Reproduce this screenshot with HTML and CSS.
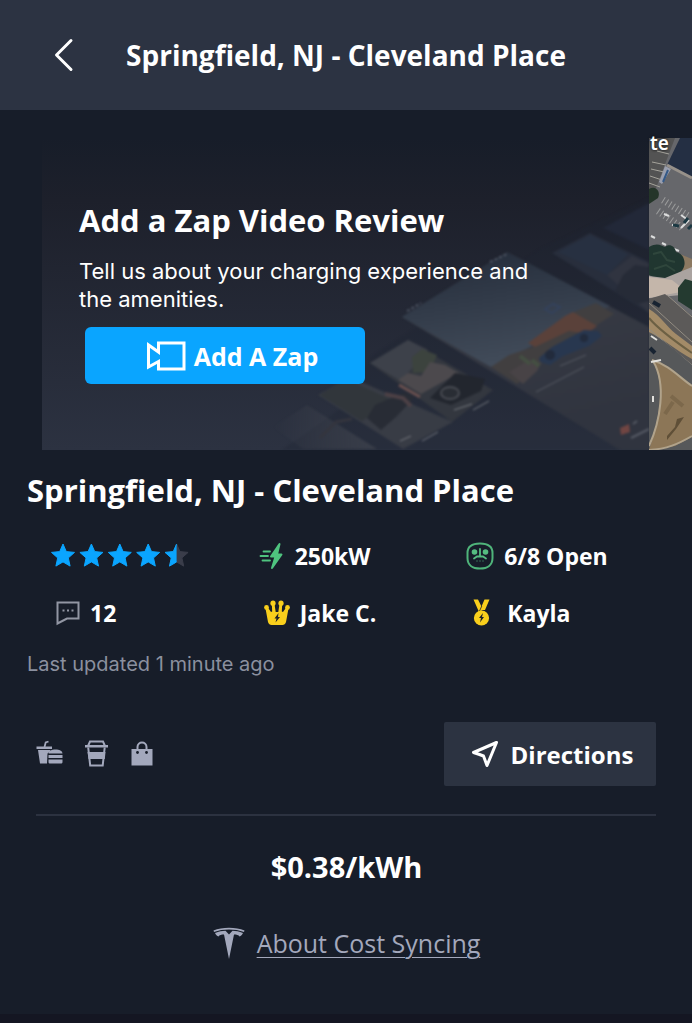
FILE: index.html
```
<!DOCTYPE html>
<html lang="en">
<head>
<meta charset="utf-8">
<meta name="viewport" content="width=device-width, initial-scale=1">
<title>Springfield, NJ - Cleveland Place</title>
<link rel="stylesheet" href="styles.css">
</head>
<body>
<header class="topbar">
  <button class="back" type="button" aria-label="Back">
    <svg width="20" height="34" viewBox="0 0 20 34"><path d="M17 2.500 2.500 17 17 31.500" fill="none" stroke="#fff" stroke-width="3" stroke-linecap="round" stroke-linejoin="round"/></svg>
  </button>
  <p class="topbar-title">Springfield, NJ - Cleveland Place</p>
</header>

<main>
  <section class="carousel" aria-label="Photos and videos">
    <article class="promo">
      <svg class="promo-art" viewBox="0 0 607 312" preserveAspectRatio="xMaxYMax slice" aria-hidden="true">
        <defs>
          <linearGradient id="sky" x1="0" y1="0" x2="0.300" y2="1"><stop offset="0" stop-color="#232b39"/><stop offset="1" stop-color="#414b59"/></linearGradient>
          <linearGradient id="road" x1="0" y1="0" x2="0.300" y2="1"><stop offset="0" stop-color="#3b3e47"/><stop offset="1" stop-color="#30343f"/></linearGradient>
          <linearGradient id="fade" x1="0" y1="0" x2="1" y2="0"><stop offset="0" stop-color="#4a4d57" stop-opacity="0"/><stop offset="1" stop-color="#41454f"/></linearGradient>
          <filter id="soft" color-interpolation-filters="sRGB"><feGaussianBlur stdDeviation="1"/></filter>
        </defs>
        <g filter="url(#soft)">
          <path d="M330 218 500 110 607 60V312H240L300 270Z" fill="#1d2431" opacity=".3"/>
          <path d="M561 90 607 65V112Z" fill="#222838"/>
          <path d="M510 115 548 95 607 124V175Z" fill="#282e3c"/>
          <path d="M516 114 548 97 586 116 565 137Z" fill="#273041"/>
          <path d="M565 137 590 118 607 126V175Z" fill="#303440"/>
          <path d="m573 153 8-16 12-10 14 2v34l-12 3Z" fill="#262b37"/>
          <path d="M360 179 465 114 607 189V312H578Z" fill="url(#road)"/>
          <path d="M360 179 465 114 568 168 449 229Z" fill="url(#sky)"/>
          <path d="m449 229 18-12 24-8 5-10 38-26 20-8 18 11-60 39-37 31Z" fill="#413f40"/>
          <path d="m486 205 37-27 8-4 24 14-10 8-18-3-34 16Z" fill="#5a413a"/>
          <path d="m497 220 13-11 32-17 14 1 4 5-13 10-26 10-13 9-10-3Z" fill="#28374f"/>
          <circle cx="508" cy="217" r="5" fill="#222b3c"/><circle cx="542" cy="200" r="4" fill="#222b3c"/>
          <path d="m467 234 14 12 14-13 4-8-12-3Z" fill="#484346"/>
          <path d="m478 218 10 8M490 222l7 6" stroke="#444f42" stroke-width="4"/>
          <path d="m494 254 48-25M518 228l26-11" stroke="#565a63" stroke-width="1"/>
          <path d="m503 171 8-5 7 3-8 6Z" fill="none" stroke="#34425c" stroke-width="2"/>
          <path d="m365 173 14-8M448 124l17-8" stroke="#4c5361" stroke-width="2" stroke-dasharray="3 2"/>
          <path d="m578 290 9-4 1 8-9 3Z" fill="#704542"/><path d="m591 286 4-3M589 300l18-9" stroke="#555963" stroke-width="2"/>
          <path d="M328 225 366 202 451 252 410 284Z" fill="#33373f"/>
          <path d="M328 225 366 202 386 212 359 243Z" fill="#3d414a"/>
          <path d="m370 219 10-8 15 6-7 17-17 1Z" fill="#3c433e"/>
          <path d="m356 242 23 14 38-21-14-8-15-3-9 14-13-3Z" fill="#4c494d"/>
          <path d="m357 247 21 12" stroke="#69504f" stroke-width="3"/>
          <path d="m388 260 25-25 30 6-4 12-30 14Z" fill="#22262e"/>
          <ellipse cx="408" cy="255" rx="9" ry="6" fill="#292d34" stroke="#484b52" stroke-width="2"/>
          <path d="m412 272 18-6M431 272l16-9" stroke="#777a80" stroke-width="1"/>
          <path d="M276 257 308 239 411 284 361 311Z" fill="#383c45"/>
          <path d="m278 257 26-16 46 21-30 21Z" fill="#31363b"/>
          <path d="m325 280 8-13 30-13 10 5-19 20-15 13Z" fill="#282c35"/>
          <path d="m343 256 18 4 8 8" stroke="#4c4045" stroke-width="4" fill="none"/>
          <path d="m358 303 11-5M380 303l16-9" stroke="#777a80" stroke-width="1"/>
          <path d="M231 289 265 267 335 311H261Z" fill="url(#fade)" opacity=".7"/>
          <path d="m278 300 16-16 16-3" stroke="#34353e" stroke-width="3" fill="none"/>
        </g>
      </svg>
      <div class="promo-body">
        <h2 class="promo-title">Add a Zap Video Review</h2>
        <p class="promo-text">Tell us about your charging experience and the amenities.</p>
        <button class="zap" type="button">
          <svg width="40" height="30" viewBox="0 0 40 30" aria-hidden="true"><path d="M12.500 11V2H38v26H12.500V20.500L2.500 26V4l10 7Z" fill="none" stroke="#fff" stroke-width="3"/></svg>
          Add A Zap
        </button>
      </div>
    </article>
    <figure class="map">
      <svg class="map-art" viewBox="0 0 43 312" preserveAspectRatio="xMinYMid slice" aria-hidden="true">
        <defs><filter id="photo" x="0" y="0" width="1" height="1" color-interpolation-filters="sRGB"><feGaussianBlur stdDeviation=".6" edgeMode="duplicate"/></filter></defs>
        <g filter="url(#photo)">
        <path fill="#66676b" d="M0 0h43v312H0Z"/>
        <path fill="#535353" d="M0 0h26L4 58H0Z"/>
        <path d="m3 24 14 3M2 31l13 3M1 38l12 4M0 45l11 4M8 13l12 3" stroke="#a5a39b" stroke-width="1"/>
        <path fill="#242f43" d="M31 0h12v40L18 27Z"/><path d="M18 27 43 40" stroke="#97918a" stroke-width="3"/>
        <path fill="#9a9fae" d="m16 28 6 3-9 15-3-2Z"/><path d="m19 32-5 12" stroke="#345987" stroke-width="2"/>
        <path fill="#243529" d="M0 51c7-4 12 3 9 9l-9 6Z"/>
        <path d="m14 62 27 17M9 73l26 18" stroke="#9b9c9c" stroke-width="7" stroke-dasharray="1 3"/>
        <path d="m15 76 5 2M23 87l6 1M32 77l7 5M32 90l8-8M2 98l4 2M13 105l4 2M25 111l5 2" stroke="#dcdddd" stroke-width="2"/>
        <path d="m24 87 6 1M35 85l4-5M39 91l4-4" stroke="#1b3842" stroke-width="3"/>
        <path fill="#8c7961" d="m26 114 17 7v13l-17-2Z"/>
        <path fill="#203630" d="M0 109c9-5 12-1 16 0 4-4 10-1 11 5 7 1 11 10 7 17-4 6-8 9-14 9l-12 1-8-4Z"/>
        <path d="m4 116 8-2 6 8 8 2M5 131l12-4 9 6" stroke="#2f463c" stroke-width="2" fill="none"/>
        <path fill="#aaa3a0" d="m0 138 16 2 27-11v27l-43 4Z"/><path fill="#c4b6aa" d="m0 139 23 3 14 11-37 7Z"/>
        <path fill="#243a30" d="m29 150 7-9 7 2v29l-14-9Z"/>
        <path fill="#5c5a59" d="m0 161 16-5 27 22v60L0 194Z"/>
        <path fill="#a38b68" d="M0 171c12 7 17 17 27 25l16 12v13c-15-8-30-21-43-27Z"/>
        <path d="M0 180c10 12 27 24 43 35" fill="none" stroke="#6c6044" stroke-width="2"/>
        <path d="m0 165 43 39M18 157l25 22M0 191l43 36" stroke="#918b81" stroke-width="1"/>
        <path fill="#56585a" d="M0 195c16 7 27 18 43 32v85H0Z"/>
        <path fill="#8c7657" d="M4 223c18 5 28 20 39 24v52l-17 9-26 4c10-29 17-64 4-89Z"/>
        <path d="M3 222c17 5 27 17 40 26M4 223c14 23 7 61-4 85M0 312c18-1 29-6 43-14" fill="none" stroke="#b1a38b" stroke-width="2"/>
        <path d="m18 302 9-11 8-12-7 2-2 8-8 9Z" fill="#5f4f37"/><path d="m22 258 12 10M16 276l8-12" stroke="#7c684b" stroke-width="4"/>
        <path d="m4 164 7 4M1 210l5 5" stroke="#182331" stroke-width="4"/><path d="m2 198 6 4M4 258v6M2 224l10-2" stroke="#e2e1dd" stroke-width="2"/>
        </g>
      </svg>
      <figcaption class="map-label">te</figcaption>
    </figure>
  </section>

  <section class="details">
    <h1 class="name">Springfield, NJ - Cleveland Place</h1>
    <ul class="stats">
      <li class="stat">
        <svg width="138" height="25" viewBox="0 0 138 25" role="img" aria-label="4.5 out of 5 stars">
          <defs>
            <path id="star" d="m12 1 3.300 7.600 8.200.8-6.200 5.500 1.800 8.200L12 18.900l-7.100 4.200 1.800-8.200L.5 9.400l8.200-.8Z" stroke-width="1" stroke-linejoin="round"/>
            <clipPath id="half"><path d="M0 0h12v25H0Z"/></clipPath>
          </defs>
          <g fill="#0aa5ff" stroke="#0aa5ff">
            <use href="#star"/><use href="#star" x="28.400"/><use href="#star" x="56.800"/><use href="#star" x="85.200"/>
          </g>
          <g transform="translate(113.600 0)"><use href="#star" fill="#3a3d4a" stroke="#3a3d4a"/><g clip-path="url(#half)"><use href="#star" fill="#0aa5ff" stroke="#0aa5ff"/></g></g>
        </svg>
      </li>
      <li class="stat">
        <svg width="26" height="28" viewBox="0 0 26 28" aria-hidden="true"><path d="M20.500 2 12 14.500h4.500l-3.500 11.500 9.500-13.500h-4.500Z" fill="#4fc47f" stroke="#4fc47f" stroke-width="2" stroke-linejoin="round"/><path d="M4.500 9.500H11M1.500 14H9M3.500 18.500H11" stroke="#4fc47f" stroke-width="1.800" stroke-linecap="round"/></svg>
        250kW
      </li>
      <li class="stat">
        <svg width="28" height="28" viewBox="0 0 28 28" aria-hidden="true"><path d="M14 1.500C22 1.500 26.500 5 26.500 11v5c0 7-5 10.500-12.500 10.500S1.500 23 1.500 16v-5C1.500 5 6 1.500 14 1.500Z" fill="none" stroke="#4fb47a" stroke-width="2"/><circle cx="8.500" cy="10" r="2.800" fill="#55bd80"/><circle cx="19.500" cy="10" r="2.800" fill="#55bd80"/><path d="M14 7v6.500M8 16.500l3-2h6l3 2" fill="none" stroke="#55bd80" stroke-width="1.800" stroke-linecap="round"/><path d="M10.500 19h1M13.500 19h1M16.500 19h1" stroke="#3f8562" stroke-width="1.500"/></svg>
        6/8 Open
      </li>
      <li class="stat stat-inset">
        <svg width="24" height="26" viewBox="0 0 24 26" aria-hidden="true"><path d="M1.500 2.500h21v16H11L1.500 23.500Z" fill="none" stroke="#9296a3" stroke-width="2"/><path d="M6.500 10.500h2M11 10.500h2M15.500 10.500h2" stroke="#9296a3" stroke-width="2"/></svg>
        12
      </li>
      <li class="stat stat-inset">
        <svg width="26" height="26" viewBox="0 0 26 26" aria-hidden="true"><g fill="#f9cf1c"><circle cx="2.500" cy="7.500" r="2.400"/><circle cx="9" cy="3.200" r="2.600"/><circle cx="17" cy="3.200" r="2.600"/><circle cx="23.500" cy="7.500" r="2.400"/><path d="m1.500 8.500 2-1.500L7 12l1.200-.5L7.800 4h2.700l1.200 8h2.600l1.200-8h2.700l-.4 7.500 1.200.5 3.500-5 2 1.500-2.500 13.500c-.5 2-2 3-3.500 3h-11c-1.500 0-3-1-3.500-3Z"/></g><path d="m14.500 13-4 5.500h2l-1 4 4.500-5.500h-2Z" fill="#1d2029"/></svg>
        Jake C.
      </li>
      <li class="stat stat-inset">
        <svg width="26" height="28" viewBox="0 0 26 28" aria-hidden="true"><path d="M2.500.5H7l3.500 7 3-7h5L14 11h-2.500L8 13ZM14 2l-4 10" fill="#f9cf1c"/><circle cx="10.500" cy="19" r="7.600" fill="#f9cf1c"/><path d="m10.800 7-2.300 5" stroke="#1d2029" stroke-width=".8"/><path d="m12 14-4 5h2l-1 4.500 4-5.500h-2Z" fill="#1d2029"/></svg>
        Kayla
      </li>
    </ul>
    <p class="updated">Last updated 1 minute ago</p>

    <div class="actions">
      <ul class="amenities">
        <li><svg width="27" height="28" viewBox="0 0 27 28" role="img" aria-label="Food"><g fill="#a3a8bc"><path d="M.500 6.500h15.500V9H.500ZM2 10h12.500l-.5 1.500-2.500 2-.5 10H4Z"/><path d="M12.500 13.500c.5-3 3-4 7-4s6.500 1 7 4Z"/><rect x="12.500" y="15" width="14" height="3"/><path d="M12.500 19.500h14V22c0 1-.8 1.500-1.500 1.500H14c-.8 0-1.500-.5-1.500-1.500Z"/></g><path d="m8.500 7 1.200-4.500L12.500 1.500" fill="none" stroke="#a3a8bc" stroke-width="1.800"/></svg></li>
        <li><svg width="24" height="28" viewBox="0 0 24 28" role="img" aria-label="Coffee"><path d="M5 1.500h13L20 6H3Z" fill="none" stroke="#a3a8bc" stroke-width="2"/><path d="M0 5h23v2.500H0ZM2.500 12h18l-.7 7H3.500Z" fill="#a3a8bc"/><path d="m3.200 7.500 2 18h12.500l2-18" fill="none" stroke="#a3a8bc" stroke-width="2"/></svg></li>
        <li><svg width="22" height="28" viewBox="0 0 22 28" role="img" aria-label="Shopping"><path d="M.500 9h21v16.500H.500Z" fill="#a3a8bc"/><path d="M6.500 12V7c0-6 9-6 9 0v5" fill="none" stroke="#a3a8bc" stroke-width="2"/><circle cx="6.500" cy="12.500" r="1.400" fill="#171d29"/><circle cx="15.500" cy="12.500" r="1.400" fill="#171d29"/></svg></li>
      </ul>
      <button class="directions" type="button">
        <svg width="28" height="28" viewBox="0 0 28 28" aria-hidden="true"><path d="M25.500 2.500 2.500 12.500l6 2 4 1.500L16 25.500Z" fill="none" stroke="#fff" stroke-width="3" stroke-linejoin="round"/></svg>
        Directions
      </button>
    </div>

    <div class="pricing">
      <p class="price">$0.38/kWh</p>
      <p class="sync">
        <svg width="32" height="32" viewBox="0 0 32 32" aria-hidden="true"><path d="M.500 3.500C9-.300 23-.300 31.500 3.500L31 5C22 1.700 10 1.700 1 5ZM2 6c4-1.500 7-2 10.500-2.200L16 7.500l3.500-3.700C23 4 26 4.500 30 6c-.8 2-2 3-3.500 3.500-.8-1.500-3-2-5.500-2L16 32 11 7.500c-2.500 0-4.700.5-5.500 2C4 9 2.800 8 2 6Z" fill="#a3a8bc"/></svg>
        <a class="sync-link" href="#cost-syncing">About Cost Syncing</a>
      </p>
    </div>
  </section>
</main>
<footer class="bottom-edge"></footer>
</body>
</html>
```
FILE: styles.css
```
* {
  box-sizing: border-box;
}

body {
  display: flex;
  flex-direction: column;
  min-height: 100vh;
  margin: 0;
  background: #171d29;
  color: #fff;
  font-family: "Open Sans", "Noto Sans", sans-serif;
}

main {
  flex: 1;
}

h1,
h2,
p,
ul,
figure {
  margin: 0;
  padding: 0;
}

ul {
  list-style: none;
}

svg {
  display: block;
  flex: none;
}

button {
  border: 0;
  color: inherit;
  font-family: inherit;
  cursor: pointer;
}

.topbar {
  display: grid;
  grid-template-columns: 72px 1fr 72px;
  align-items: center;
  height: 110px;
  padding: 0 6px;
  background: #2c3342;
}

.back {
  justify-self: end;
  padding: 4px;
  background: none;
}

.topbar-title {
  font-size: 28px;
  font-weight: 700;
  line-height: 36px;
  text-align: center;
  white-space: nowrap;
}

.carousel {
  display: flex;
  height: 340px;
  padding: 28px 0 0 42px;
  overflow: hidden;
}

.promo {
  position: relative;
  flex: 1;
  min-width: 0;
  overflow: hidden;
  background: linear-gradient(#171d29, #1d202b 20%, #2c3241);
}

.promo-art {
  position: absolute;
  inset: 0;
  width: 100%;
  height: 100%;
}

.promo-body {
  position: relative;
  padding: 62px 100px 0 37px;
}

.promo-title {
  font-size: 31px;
  font-weight: 700;
  line-height: 40px;
  white-space: nowrap;
}

.promo-text {
  margin-top: 17px;
  font-family: Inter, sans-serif;
  font-size: 22px;
  line-height: 28px;
}

.zap {
  display: flex;
  align-items: center;
  justify-content: center;
  gap: 8px;
  width: 280px;
  height: 57px;
  margin: 14px 0 0 6px;
  padding: 0 0 0 14px;
  border-radius: 6px;
  background: #0aa5ff;
  font-size: 25px;
  font-weight: 700;
}

.map {
  position: relative;
  flex: 0 0 43px;
}

.map-art {
  width: 100%;
  height: 100%;
}

.map-label {
  position: absolute;
  top: -7px;
  left: 1px;
  font-family: "Noto Sans", sans-serif;
  font-size: 19px;
  font-weight: 600;
  line-height: 24px;
  text-shadow: 0 0 3px #000;
}

.details {
  padding: 20px 36px 0 27px;
}

.name {
  font-size: 31px;
  font-weight: 700;
  line-height: 40px;
}

.stats {
  display: grid;
  grid-template-columns: repeat(3, 1fr);
  grid-auto-rows: 57px;
  margin: 17px 6px 9px 0;
  font-size: 23px;
  font-weight: 700;
}

.stat {
  display: flex;
  align-items: center;
  gap: 10px;
  padding-left: 24px;
  white-space: nowrap;
}

.stat-inset {
  padding-left: 29px;
}

.updated {
  color: #8b909f;
  font-family: Inter, sans-serif;
  font-size: 20px;
  line-height: 28px;
}

.actions {
  display: flex;
  align-items: center;
  justify-content: space-between;
  margin-left: 9px;
  padding: 44px 0 28px;
  border-bottom: 2px solid #2c3240;
}

.amenities {
  display: flex;
  gap: 22px;
}

.directions {
  display: flex;
  align-items: center;
  justify-content: center;
  gap: 12px;
  width: 212px;
  height: 64px;
  padding: 0 0 0 4px;
  border-radius: 2px;
  background: #2c3341;
  font-size: 24px;
  font-weight: 700;
}

.pricing {
  padding: 33px 0 36px 10px;
  text-align: center;
}

.price {
  font-size: 29px;
  font-weight: 700;
  line-height: 36px;
}

.sync {
  display: flex;
  align-items: center;
  justify-content: center;
  gap: 12px;
  margin-top: 40px;
}

.sync-link {
  color: #a3a8bc;
  font-size: 25px;
  line-height: 36px;
  text-decoration-thickness: 1px;
  text-underline-offset: 4px;
}

.bottom-edge {
  height: 9px;
  background: #141622;
}
```
